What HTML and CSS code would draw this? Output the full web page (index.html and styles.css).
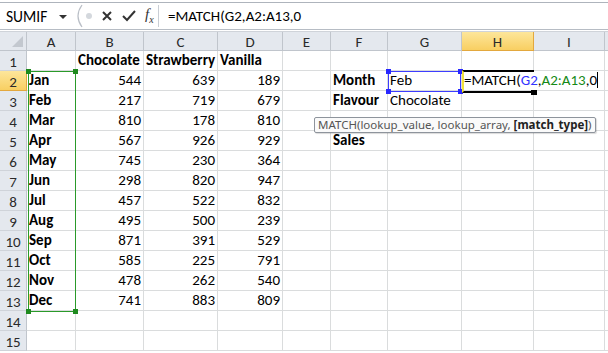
FILE: index.html
```html
<!DOCTYPE html>
<html lang="en">
<head>
    <meta charset="UTF-8">
    <title>MATCH - Excel</title>
    <link rel="stylesheet" href="styles.css">
</head>
<body>
    <div class="formula-bar">
        <div class="name-box">
            <span>SUMIF</span>
            <span class="caret"></span>
        </div>
        <div class="fx-buttons">
            <svg class="sep" width="10" height="24" viewBox="0 0 10 24">
                <path d="M9 1 Q1 12 9 23" fill="none" stroke="#b9bec6" stroke-width="1.2"/>
            </svg>
            <span class="dot"></span>
            <svg width="12" height="12" viewBox="0 0 12 12">
                <path d="M2 2 L10 10 M10 2 L2 10" stroke="#333" stroke-width="2"/>
            </svg>
            <svg width="14" height="12" viewBox="0 0 14 12">
                <path d="M1 6 L5 10 L13 1" fill="none" stroke="#333" stroke-width="2"/>
            </svg>
            <span class="fx">f<sub>x</sub></span>
        </div>
        <div class="formula-input">=MATCH(G2,A2:A13,0</div>
    </div>
    <div class="strip"></div>

    <div class="sheet">
        <div class="grid">
            <div class="corner"><span class="tri"></span></div>
            <div class="col-head">A</div>
            <div class="col-head">B</div>
            <div class="col-head">C</div>
            <div class="col-head">D</div>
            <div class="col-head">E</div>
            <div class="col-head">F</div>
            <div class="col-head">G</div>
            <div class="col-head active">H</div>
            <div class="col-head">I</div>
            <div class="col-head rest"></div>

            <div class="row-head">1</div>
            <div class="cell"></div>
            <div class="cell b">Chocolate</div>
            <div class="cell b">Strawberry</div>
            <div class="cell b">Vanilla</div>
            <div class="cell"></div>
            <div class="cell"></div>
            <div class="cell"></div>
            <div class="cell"></div>
            <div class="cell"></div>
            <div class="cell rest"></div>

            <div class="row-head active">2</div>
            <div class="cell b">Jan</div>
            <div class="cell num">544</div>
            <div class="cell num">639</div>
            <div class="cell num">189</div>
            <div class="cell"></div>
            <div class="cell b">Month</div>
            <div class="cell">Feb</div>
            <div class="cell editing"><span>=MATCH(</span><span class="ref-g">G2</span><span>,</span><span class="ref-a">A2:A13</span><span>,0</span><span class="cursor"></span></div>
            <div class="cell rest"></div>

            <div class="row-head">3</div>
            <div class="cell b">Feb</div>
            <div class="cell num">217</div>
            <div class="cell num">719</div>
            <div class="cell num">679</div>
            <div class="cell"></div>
            <div class="cell b">Flavour</div>
            <div class="cell">Chocolate</div>
            <div class="cell"></div>
            <div class="cell"></div>
            <div class="cell rest"></div>

            <div class="row-head">4</div>
            <div class="cell b">Mar</div>
            <div class="cell num">810</div>
            <div class="cell num">178</div>
            <div class="cell num">810</div>
            <div class="cell"></div>
            <div class="cell"></div>
            <div class="cell"></div>
            <div class="cell"></div>
            <div class="cell"></div>
            <div class="cell rest"></div>

            <div class="row-head">5</div>
            <div class="cell b">Apr</div>
            <div class="cell num">567</div>
            <div class="cell num">926</div>
            <div class="cell num">929</div>
            <div class="cell"></div>
            <div class="cell b">Sales</div>
            <div class="cell"></div>
            <div class="cell"></div>
            <div class="cell"></div>
            <div class="cell rest"></div>

            <div class="row-head">6</div>
            <div class="cell b">May</div>
            <div class="cell num">745</div>
            <div class="cell num">230</div>
            <div class="cell num">364</div>
            <div class="cell"></div>
            <div class="cell"></div>
            <div class="cell"></div>
            <div class="cell"></div>
            <div class="cell"></div>
            <div class="cell rest"></div>

            <div class="row-head">7</div>
            <div class="cell b">Jun</div>
            <div class="cell num">298</div>
            <div class="cell num">820</div>
            <div class="cell num">947</div>
            <div class="cell"></div>
            <div class="cell"></div>
            <div class="cell"></div>
            <div class="cell"></div>
            <div class="cell"></div>
            <div class="cell rest"></div>

            <div class="row-head">8</div>
            <div class="cell b">Jul</div>
            <div class="cell num">457</div>
            <div class="cell num">522</div>
            <div class="cell num">832</div>
            <div class="cell"></div>
            <div class="cell"></div>
            <div class="cell"></div>
            <div class="cell"></div>
            <div class="cell"></div>
            <div class="cell rest"></div>

            <div class="row-head">9</div>
            <div class="cell b">Aug</div>
            <div class="cell num">495</div>
            <div class="cell num">500</div>
            <div class="cell num">239</div>
            <div class="cell"></div>
            <div class="cell"></div>
            <div class="cell"></div>
            <div class="cell"></div>
            <div class="cell"></div>
            <div class="cell rest"></div>

            <div class="row-head">10</div>
            <div class="cell b">Sep</div>
            <div class="cell num">871</div>
            <div class="cell num">391</div>
            <div class="cell num">529</div>
            <div class="cell"></div>
            <div class="cell"></div>
            <div class="cell"></div>
            <div class="cell"></div>
            <div class="cell"></div>
            <div class="cell rest"></div>

            <div class="row-head">11</div>
            <div class="cell b">Oct</div>
            <div class="cell num">585</div>
            <div class="cell num">225</div>
            <div class="cell num">791</div>
            <div class="cell"></div>
            <div class="cell"></div>
            <div class="cell"></div>
            <div class="cell"></div>
            <div class="cell"></div>
            <div class="cell rest"></div>

            <div class="row-head">12</div>
            <div class="cell b">Nov</div>
            <div class="cell num">478</div>
            <div class="cell num">262</div>
            <div class="cell num">540</div>
            <div class="cell"></div>
            <div class="cell"></div>
            <div class="cell"></div>
            <div class="cell"></div>
            <div class="cell"></div>
            <div class="cell rest"></div>

            <div class="row-head">13</div>
            <div class="cell b">Dec</div>
            <div class="cell num">741</div>
            <div class="cell num">883</div>
            <div class="cell num">809</div>
            <div class="cell"></div>
            <div class="cell"></div>
            <div class="cell"></div>
            <div class="cell"></div>
            <div class="cell"></div>
            <div class="cell rest"></div>

            <div class="row-head">14</div>
            <div class="cell"></div>
            <div class="cell"></div>
            <div class="cell"></div>
            <div class="cell"></div>
            <div class="cell"></div>
            <div class="cell"></div>
            <div class="cell"></div>
            <div class="cell"></div>
            <div class="cell"></div>
            <div class="cell rest"></div>

            <div class="row-head">15</div>
            <div class="cell"></div>
            <div class="cell"></div>
            <div class="cell"></div>
            <div class="cell"></div>
            <div class="cell"></div>
            <div class="cell"></div>
            <div class="cell"></div>
            <div class="cell"></div>
            <div class="cell"></div>
            <div class="cell rest"></div>
        </div>

        <!-- range highlights drawn over the grid -->
        <div class="range range-a">
            <i class="h tl"></i><i class="h tr"></i><i class="h bl"></i><i class="h br"></i>
        </div>
        <div class="range range-g">
            <i class="h tl"></i><i class="h tr"></i><i class="h bl"></i><i class="h br"></i>
        </div>
        <div class="active-cell"><i class="fill"></i></div>

        <div class="tooltip">MATCH(lookup_value, lookup_array, <b>[match_type]</b>)</div>
    </div>
</body>
</html>
```

FILE: styles.css
```css
:root {
    --grid-line: #dadcdd;
    --head-bg: #e4e8ee;
    --head-line: #c0c5cc;
    --text: #000;
    --ref-blue: #3333ff;
    --ref-green: #168a16;
}

* {
    margin: 0;
    padding: 0;
    box-sizing: border-box;
}

body {
    width: 608px;
    height: 353px;
    overflow: hidden;
    background: #fff;
    font-family: Carlito, Lato, "Liberation Sans", sans-serif;
    font-size: 15px;
    color: var(--text);
}

/* formula bar */
.formula-bar {
    display: flex;
    height: 28px;
    margin-top: 2px;
    border-top: 1px solid #aeb4bc;
    border-bottom: 1px solid #b6bcc4;
    background: #fff;
}

.name-box {
    width: 73px;
    display: flex;
    align-items: center;
    justify-content: space-between;
    padding: 0 6px 0 6px;
    font-size: 15.5px;
}

.caret {
    width: 0;
    height: 0;
    border-left: 4px solid transparent;
    border-right: 4px solid transparent;
    border-top: 4px solid #333;
    margin-top: 2px;
}

.fx-buttons {
    width: 86px;
    display: flex;
    align-items: center;
    gap: 9px;
    border-right: 1px solid #c9ced5;
    margin: 2px 0;
}

.dot {
    width: 6px;
    height: 6px;
    border-radius: 50%;
    background: #d4d8dd;
    margin-left: -6px;
}

.fx {
    font-family: "Liberation Serif", serif;
    font-style: italic;
    font-size: 15px;
    color: #333;
    line-height: 1;
}

.fx sub {
    font-size: 10px;
}

.formula-input {
    flex: 1;
    display: flex;
    align-items: center;
    padding-left: 9px;
    font-size: 15px;
}

.strip {
    height: 2px;
    background: #fff;
    border-bottom: 1px solid #cfd3d9;
}

/* sheet */
.sheet {
    position: relative;
}

.grid {
    display: grid;
    grid-template-columns: 27px 49px 68px 74px 65px 48px 57px 74px 72px 71px 1fr;
    grid-template-rows: 19px;
    grid-auto-rows: 20px;
}

.corner,
.col-head,
.row-head {
    background: var(--head-bg);
    border-right: 1px solid var(--head-line);
    border-bottom: 1px solid var(--head-line);
    color: #2a2a2a;
    display: flex;
    align-items: center;
    justify-content: center;
}

.corner {
    position: relative;
}

.tri {
    position: absolute;
    right: 3px;
    bottom: 3px;
    width: 0;
    height: 0;
    border-left: 11px solid transparent;
    border-bottom: 11px solid #c3c8cf;
}

.col-head {
    font-size: 15px;
    padding-top: 1px;
}

.row-head {
    font-size: 15px;
    padding-top: 2px;
    border-bottom-color: #cfd3d9;
}

.col-head.active,
.row-head.active {
    background: linear-gradient(#fde69b, #f8cf62);
    border-color: #e3a83e;
}

.rest {
    border-right: none;
}

.cell {
    border-right: 1px solid var(--grid-line);
    border-bottom: 1px solid var(--grid-line);
    padding: 0 2px;
    display: flex;
    align-items: flex-end;
    padding-bottom: 1px;
    white-space: nowrap;
    overflow: visible;
}

.b {
    font-weight: bold;
}

.num {
    justify-content: flex-end;
}

.editing {
    grid-column: span 2;
    background: #fff;
    position: relative;
    z-index: 1;
}

.ref-g {
    color: var(--ref-blue);
}

.ref-a {
    color: var(--ref-green);
}

.cursor {
    width: 1px;
    height: 16px;
    background: #000;
    margin-bottom: 1px;
}

/* highlighted ranges */
.range {
    position: absolute;
    pointer-events: none;
    z-index: 2;
}

.range-a {
    left: 28px;
    top: 39px;
    width: 48px;
    height: 241px;
    border: 1px solid #2a9a2a;
}

.range-g {
    left: 388px;
    top: 39px;
    width: 73px;
    height: 21px;
    border: 1px solid #3d3dff;
}

.h {
    position: absolute;
    width: 5px;
    height: 5px;
}

.range-a .h {
    background: #1f8a1f;
}

.range-g .h {
    background: #2828ff;
}

.tl { left: -3px; top: -3px; }
.tr { right: -3px; top: -3px; }
.bl { left: -3px; bottom: -3px; }
.br { right: -3px; bottom: -3px; }

.active-cell {
    position: absolute;
    left: 462px;
    top: 38px;
    width: 72px;
    height: 23px;
    border-top: 2px solid #000;
    border-bottom: 2px solid #000;
    border-left: 2px solid #f2e23a;
    z-index: 3;
    pointer-events: none;
}

.fill {
    position: absolute;
    right: -3px;
    bottom: -4px;
    width: 6px;
    height: 5px;
    background: #000;
}

.tooltip {
    position: absolute;
    left: 314px;
    top: 85px;
    height: 16px;
    padding: 0 3px;
    border: 1px solid #8e949c;
    border-radius: 2px;
    background: #fafafa;
    box-shadow: 1px 1px 1px rgba(0, 0, 0, 0.15);
    font-family: "Noto Sans", "Open Sans", sans-serif;
    font-size: 11.5px;
    line-height: 14px;
    color: #555;
    white-space: nowrap;
    z-index: 4;
}

.tooltip b {
    color: #222;
}
```
